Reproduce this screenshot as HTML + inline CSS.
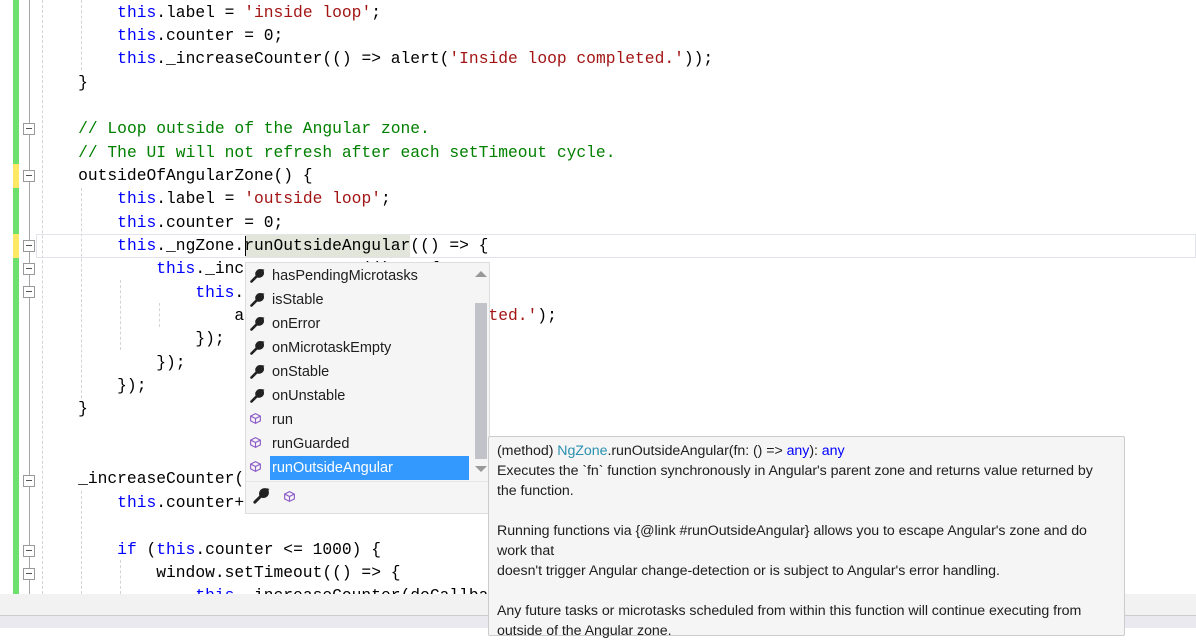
<!DOCTYPE html>
<html><head><meta charset="utf-8"><style>
*{margin:0;padding:0;box-sizing:border-box}
body{width:1196px;height:628px;overflow:hidden;background:#fff;position:relative;font-family:"Liberation Mono",monospace}
.l{position:absolute;left:39px;height:23.35px;line-height:23.35px;font-size:16.3px;white-space:pre;color:#000}
.k{color:#0000ff}.s{color:#a31515}.c{color:#008000}
.g{position:absolute;left:13px;width:6px}
.box{position:absolute;left:23px;width:12px;height:12px;border:1px solid #999;background:#fff}
.box:after{content:"";position:absolute;left:2px;top:4px;width:6px;height:1px;background:#555}
.d{position:absolute;width:0;border-left:1px dashed #d4d4d4}
.pop{position:absolute;left:245px;top:262px;width:245px;height:252px;background:#f5f5f5;border:1px solid #ddd;font-family:"Liberation Sans",sans-serif;font-size:14.5px}
.it{position:absolute;left:26px;height:24px;line-height:24px;color:#1e1e1e}
.ic{position:absolute;left:3px;width:16px;height:16px}
.tip{position:absolute;left:488px;top:436px;width:637px;height:200px;background:#f5f5f5;border:1px solid #ccc;border-radius:2px;font-family:"Liberation Sans",sans-serif;font-size:14.2px;color:#1e1e1e;padding:4px 8px;line-height:20px;letter-spacing:-0.05px}
</style></head><body>
<div class="g" style="top:0;height:594px;background:#6de06d"></div>
<div class="g" style="top:164px;height:24px;background:#ffe866"></div>
<div class="g" style="top:234px;height:24px;background:#ffe866"></div>
<div style="position:absolute;left:29px;top:0;width:1px;height:594px;background:#a5a5a5"></div>
<div class="d" style="left:42px;top:0;height:594px"></div>
<div class="d" style="left:81px;top:0;height:70px"></div>
<div class="d" style="left:81px;top:188px;height:210px"></div>
<div class="d" style="left:81px;top:491px;height:103px"></div>
<div class="d" style="left:120px;top:280px;height:70px"></div>
<div class="d" style="left:120px;top:560px;height:34px"></div>
<div class="d" style="left:159px;top:303px;height:24px"></div>
<div style="position:absolute;left:36px;top:234px;width:1160px;height:24px;border:1px solid #e3e3ea"></div>
<div style="position:absolute;left:245px;top:235px;width:165px;height:22px;background:#e2e5d9"></div>
<div style="position:absolute;left:245px;top:236px;width:1px;height:20px;background:#000"></div>
<div class="box" style="top:123px"></div>
<div class="box" style="top:170px"></div>
<div class="box" style="top:240px"></div>
<div class="box" style="top:263px"></div>
<div class="box" style="top:286px"></div>
<div class="box" style="top:475px"></div>
<div class="box" style="top:545px"></div>
<div class="box" style="top:568px"></div>
<div class="l" style="top:0.5px">        <span class="k">this</span>.label = <span class="s">'inside loop'</span>;</div>
<div class="l" style="top:23.8px">        <span class="k">this</span>.counter = 0;</div>
<div class="l" style="top:47.2px">        <span class="k">this</span>._increaseCounter(() =&gt; alert(<span class="s">'Inside loop completed.'</span>));</div>
<div class="l" style="top:70.5px">    }</div>
<div class="l" style="top:117.2px">    <span class="c">// Loop outside of the Angular zone.</span></div>
<div class="l" style="top:140.5px">    <span class="c">// The UI will not refresh after each setTimeout cycle.</span></div>
<div class="l" style="top:163.9px">    outsideOfAngularZone() {</div>
<div class="l" style="top:187.2px">        <span class="k">this</span>.label = <span class="s">'outside loop'</span>;</div>
<div class="l" style="top:210.6px">        <span class="k">this</span>.counter = 0;</div>
<div class="l" style="top:233.9px">        <span class="k">this</span>._ngZone.runOutsideAngular(() =&gt; {</div>
<div class="l" style="top:257.3px">            <span class="k">this</span>._increaseCounter(() =&gt; {</div>
<div class="l" style="top:280.6px">                <span class="k">this</span>.label = <span class="s">'x'</span>;</div>
<div class="l" style="top:304px">                    alert(<span class="s">'Outside loop completed.'</span>);</div>
<div class="l" style="top:327.3px">                });</div>
<div class="l" style="top:350.7px">            });</div>
<div class="l" style="top:374px">        });</div>
<div class="l" style="top:397.4px">    }</div>
<div class="l" style="top:467.4px">    _increaseCounter(doCallback) {</div>
<div class="l" style="top:490.8px">        <span class="k">this</span>.counter++;</div>
<div class="l" style="top:537.5px">        <span class="k">if</span> (<span class="k">this</span>.counter &lt;= 1000) {</div>
<div class="l" style="top:560.8px">            window.setTimeout(() =&gt; {</div>
<div class="l" style="top:584.2px">                <span class="k">this</span>._increaseCounter(doCallback);</div>
<div style="position:absolute;left:0;top:594px;width:1196px;height:21px;background:#f2f2f2"></div>
<div style="position:absolute;left:0;top:615px;width:1196px;height:13px;background:#e9e9ef;border-top:1px solid #ccc"></div>
<svg width="0" height="0" style="position:absolute"><defs>
<symbol id="w" viewBox="0 0 16 16"><path d="M2.5 13.5 L8 8 M8 8 C6.5 4.5 9 1.5 13 2.5 L10.5 5 L11 6 L13.5 3.5 C14.5 7 11.5 9.5 8 8" stroke="#222" stroke-width="2.6" fill="#222" stroke-linecap="round"/></symbol>
<symbol id="cb" viewBox="0 0 16 16"><path d="M8 2 L14 5 L14 11 L8 14 L2 11 L2 5 Z M2 5 L8 8 L14 5 M8 8 L8 14" stroke="#8e5cc9" stroke-width="1.4" fill="none"/></symbol>
</defs></svg>
<div class="pop">
<div class="it" style="top:1px">hasPendingMicrotasks</div><svg class="ic" style="top:5px"><use href="#w"/></svg>
<div class="it" style="top:25px">isStable</div><svg class="ic" style="top:29px"><use href="#w"/></svg>
<div class="it" style="top:49px">onError</div><svg class="ic" style="top:53px"><use href="#w"/></svg>
<div class="it" style="top:73px">onMicrotaskEmpty</div><svg class="ic" style="top:77px"><use href="#w"/></svg>
<div class="it" style="top:97px">onStable</div><svg class="ic" style="top:101px"><use href="#w"/></svg>
<div class="it" style="top:121px">onUnstable</div><svg class="ic" style="top:125px"><use href="#w"/></svg>
<div class="it" style="top:145px">run</div><svg class="ic" style="top:149px;width:13px;height:13px"><use href="#cb"/></svg>
<div class="it" style="top:169px">runGuarded</div><svg class="ic" style="top:173px;width:13px;height:13px"><use href="#cb"/></svg>
<div style="position:absolute;left:24px;top:193px;width:199px;height:24px;background:#3399ff"></div>
<div class="it" style="top:193px;color:#fff">runOutsideAngular</div><svg class="ic" style="top:197px;width:13px;height:13px"><use href="#cb"/></svg>
<div style="position:absolute;left:229px;top:40px;width:12px;height:156px;background:#c2c3c9"></div>
<div style="position:absolute;left:229px;top:8px;border:6px solid transparent;border-bottom:6px solid #999;border-top:0"></div>
<div style="position:absolute;left:229px;top:203px;border:6px solid transparent;border-top:6px solid #999;border-bottom:0"></div>
<div style="position:absolute;left:0;top:218px;width:243px;height:1px;background:#e6e6e6"></div>
<svg class="ic" style="left:6px;top:224px;width:18px;height:18px"><use href="#w"/></svg>
<svg class="ic" style="left:37px;top:227px;width:13px;height:13px"><use href="#cb"/></svg>
</div>
<div class="tip">
<div>(method) <span style="color:#2b91af">NgZone</span>.runOutsideAngular(fn: () =&gt; <span style="color:#0000ff">any</span>): <span style="color:#0000ff">any</span></div>
<div>Executes the `fn` function synchronously in Angular's parent zone and returns value returned by</div>
<div>the function.</div>
<div>&nbsp;</div>
<div>Running functions via {@link #runOutsideAngular} allows you to escape Angular's zone and do</div>
<div>work that</div>
<div>doesn't trigger Angular change-detection or is subject to Angular's error handling.</div>
<div>&nbsp;</div>
<div>Any future tasks or microtasks scheduled from within this function will continue executing from</div>
<div>outside of the Angular zone.</div>
</div>
</body></html>
